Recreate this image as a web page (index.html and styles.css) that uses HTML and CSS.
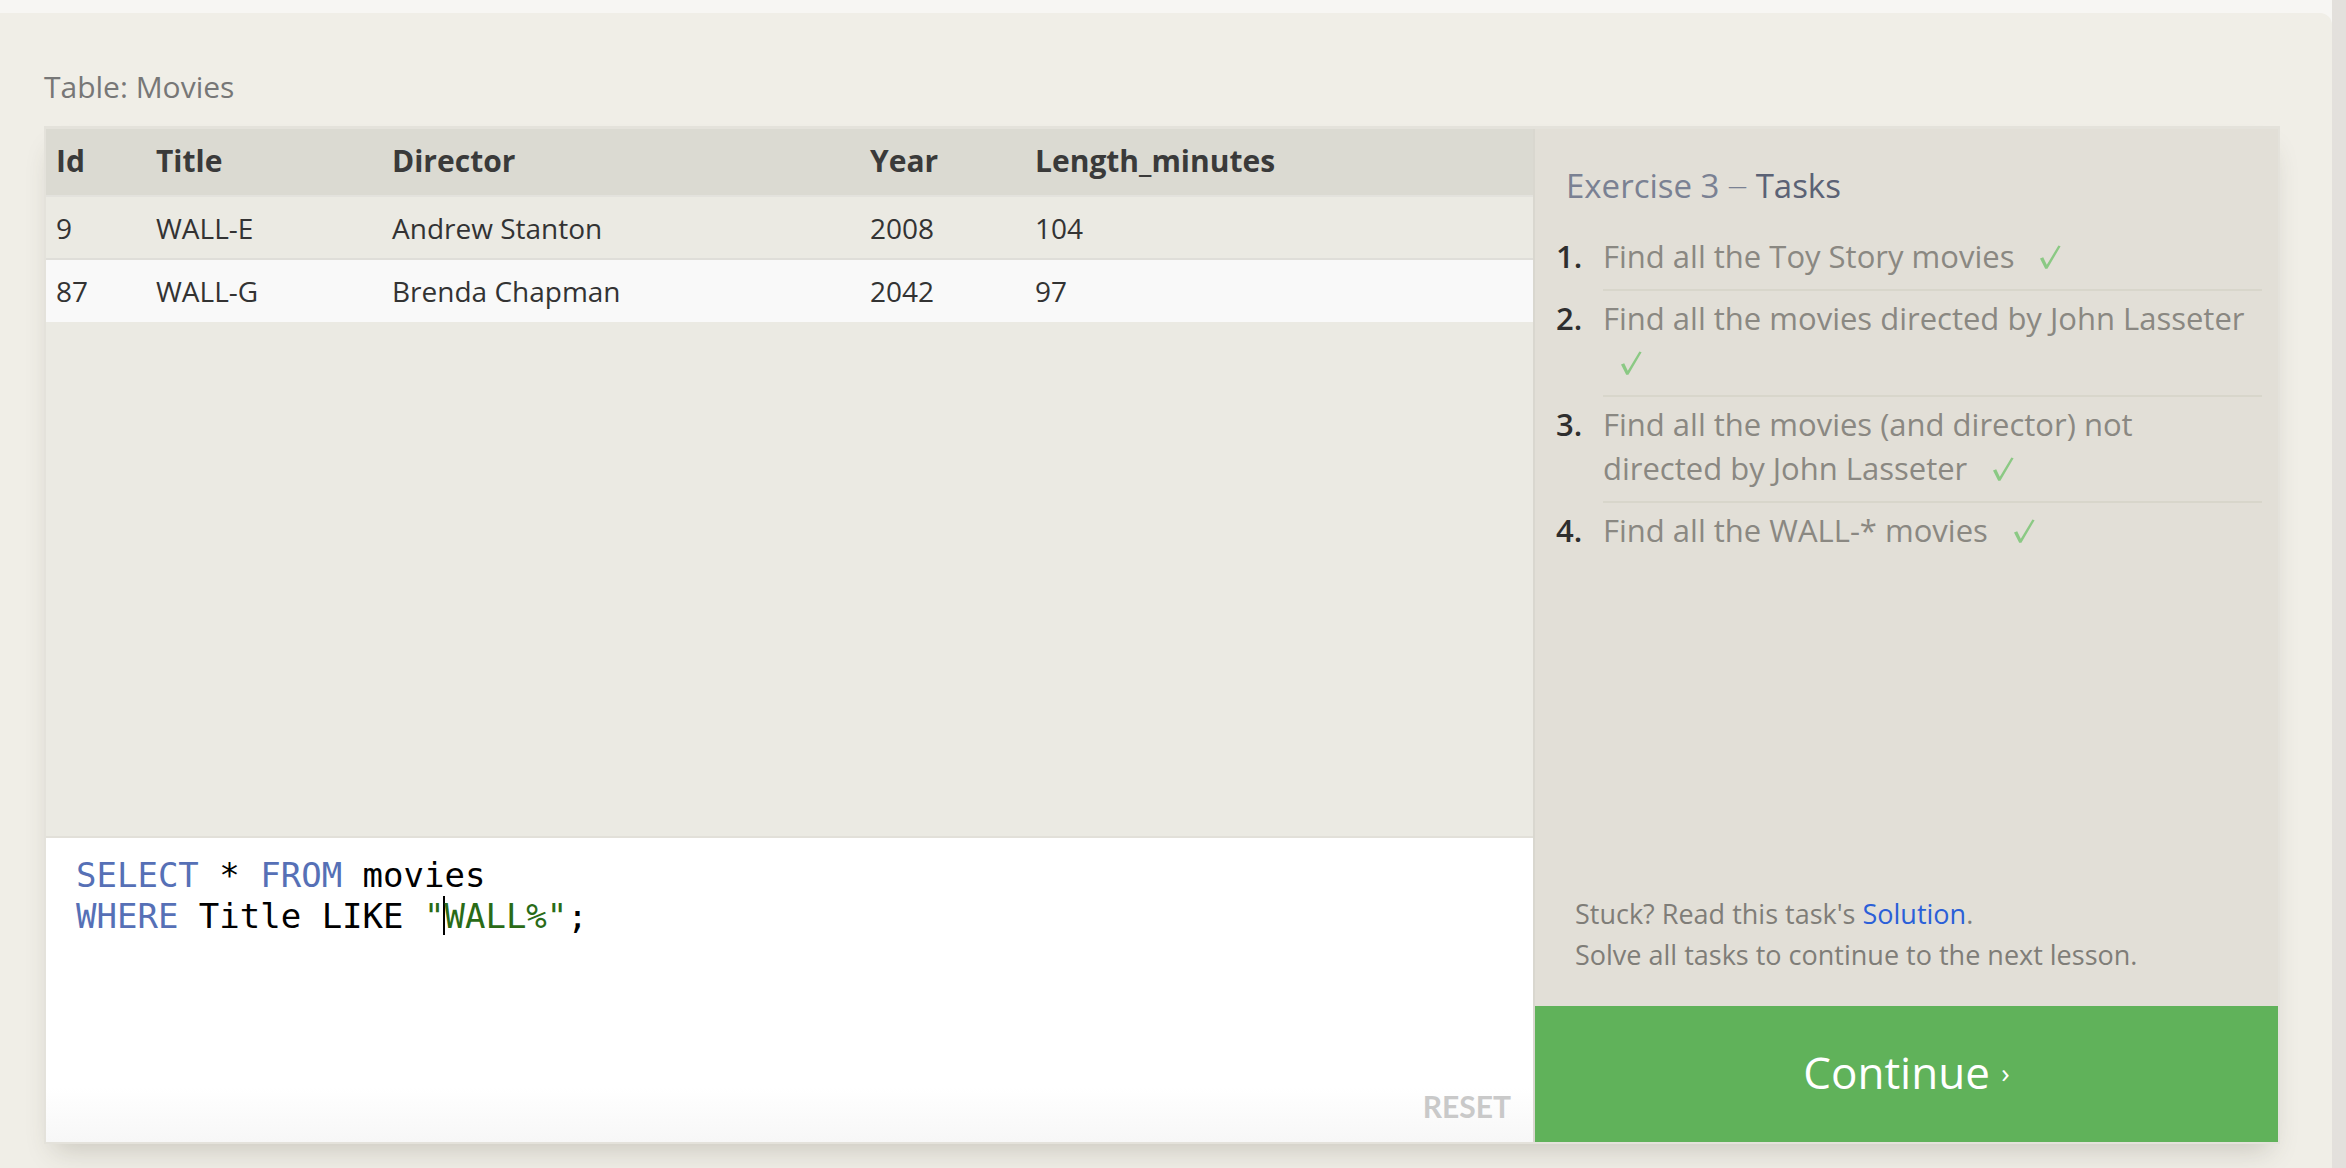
FILE: index.html
```html
<!DOCTYPE html>
<html lang="en">
<head>
<meta charset="utf-8">
<title>SQL Lesson 3: Queries with constraints (Pt. 2)</title>
<link rel="stylesheet" href="styles.css">
</head>
<body>
<div class="page">
  <div class="frame">
    <div class="topstrip"></div>
    <main class="card">
      <div class="label">Table: Movies</div>
      <div class="workspace">
        <section class="left">
          <div class="table" role="table">
            <div class="tr th" role="row">
              <div role="columnheader">Id</div>
              <div role="columnheader">Title</div>
              <div role="columnheader">Director</div>
              <div role="columnheader">Year</div>
              <div role="columnheader">Length_minutes</div>
            </div>
            <div class="tr r1" role="row">
              <div role="cell">9</div>
              <div role="cell">WALL-E</div>
              <div role="cell">Andrew Stanton</div>
              <div role="cell">2008</div>
              <div role="cell">104</div>
            </div>
            <div class="tr r2" role="row">
              <div role="cell">87</div>
              <div role="cell">WALL-G</div>
              <div role="cell">Brenda Chapman</div>
              <div role="cell">2042</div>
              <div role="cell">97</div>
            </div>
          </div>
          <div class="editor">
            <div class="code">
              <div class="line"><span class="kw">SELECT</span> * <span class="kw">FROM</span> movies</div>
              <div class="line"><span class="kw">WHERE</span> Title LIKE <span class="str">"<span class="cursor"></span>WALL%"</span>;</div>
            </div>
            <div class="editor-foot"><span class="reset">RESET</span></div>
          </div>
        </section>
        <aside class="panel">
          <h2 class="title">Exercise 3 <span class="dash">—</span> <span class="strong">Tasks</span></h2>
          <ol class="tasks">
            <li><span class="num">1.</span><span class="body">Find all the Toy Story movies <svg class="check" viewBox="0 0 22 24" width="22" height="24" aria-label="✓"><polygon points="1,13.5 4.2,12.3 7.8,19.8 19.4,0.5 21.6,1.3 8.4,23.7 6.2,23.7"/></svg></span></li>
            <li><span class="num">2.</span><span class="body">Find all the movies directed by John Lasseter <svg class="check" viewBox="0 0 22 24" width="22" height="24" aria-label="✓"><polygon points="1,13.5 4.2,12.3 7.8,19.8 19.4,0.5 21.6,1.3 8.4,23.7 6.2,23.7"/></svg></span></li>
            <li><span class="num">3.</span><span class="body">Find all the movies (and director) not directed by John Lasseter <svg class="check" viewBox="0 0 22 24" width="22" height="24" aria-label="✓"><polygon points="1,13.5 4.2,12.3 7.8,19.8 19.4,0.5 21.6,1.3 8.4,23.7 6.2,23.7"/></svg></span></li>
            <li><span class="num">4.</span><span class="body">Find all the WALL-* movies <svg class="check" viewBox="0 0 22 24" width="22" height="24" aria-label="✓"><polygon points="1,13.5 4.2,12.3 7.8,19.8 19.4,0.5 21.6,1.3 8.4,23.7 6.2,23.7"/></svg></span></li>
          </ol>
          <div class="help">
            <p>Stuck? Read this task's <a href="#" class="link">Solution</a>.</p>
            <p>Solve all tasks to continue to the next lesson.</p>
          </div>
          <a href="#" class="continue">Continue <span class="chev">›</span></a>
        </aside>
      </div>
    </main>
  </div>
  <div class="sidestrip"></div>
</div>
</body>
</html>
```

FILE: styles.css
```css
html, body {
  margin: 0;
  padding: 0;
}

body {
  background: #f7f6f3;
  font-family: "Open Sans", "Noto Sans", sans-serif;
  color: #333;
  overflow: hidden;
}

.page {
  display: flex;
  width: 2346px;
  height: 1168px;
  overflow: hidden;
}

.frame {
  flex: 1;
  display: flex;
  flex-direction: column;
}

.topstrip {
  height: 13px;
  flex: none;
  background: #f7f6f3;
}

.card {
  flex: 1;
  background: #f0eee7;
  border-top-right-radius: 12px;
  padding: 54px 52px 0 44px;
}

.sidestrip {
  width: 14px;
  flex: none;
  background: #e3e0dc;
}

.label {
  font-size: 30px;
  line-height: 40px;
  color: #777;
}

.workspace {
  box-sizing: border-box;
  margin-top: 19px;
  width: 2236px;
  height: 1018px;
  border: 2px solid #e4e2db;
  border-top-width: 3px;
  display: grid;
  grid-template-columns: 1487px 1fr;
  box-shadow: 0 16px 26px -10px rgba(70, 64, 45, 0.22);
}

/* left column */
.left {
  display: flex;
  flex-direction: column;
  min-height: 0;
}

.table {
  flex: 1;
  background: #ebeae3;
}

.tr {
  box-sizing: border-box;
  display: grid;
  grid-template-columns: 100px 236px 478px 165px 1fr;
  align-items: center;
}

.tr > div {
  padding-left: 10px;
}

.th {
  height: 66px;
  padding-bottom: 3px;
  background: #dbdad2;
  font-size: 30px;
  font-weight: 700;
  color: #3a3a3a;
}

.r1 {
  height: 63px;
  border-top: 2px solid #e3e2dd;
  background: #ebeae3;
  font-size: 28px;
  color: #333;
}

.r2 {
  height: 64px;
  border-top: 2px solid #dfded9;
  background: #f9f9f9;
  font-size: 28px;
  color: #333;
}

.editor {
  box-sizing: border-box;
  height: 306px;
  flex: none;
  border-top: 2px solid #e2e0d9;
  background: linear-gradient(to bottom, #ffffff 0%, #ffffff 82%, #f7f7f7 100%);
  display: flex;
  flex-direction: column;
}

.code {
  flex: 1;
  padding: 17px 0 0 30px;
  font-family: "DejaVu Sans Mono", "Liberation Mono", monospace;
  font-size: 34px;
  line-height: 41px;
  color: #000;
}

.line {
  white-space: pre;
}

.kw {
  color: #5670b6;
}

.str {
  color: #2a6b17;
}

.cursor {
  display: inline-block;
  width: 0;
  height: 39px;
  border-left: 2px solid #000;
  margin-left: -1px;
  margin-right: -1px;
  vertical-align: -7px;
}

.editor-foot {
  text-align: right;
  padding: 0 22px 18px 0;
}

.reset {
  font-family: Lato, "Open Sans", sans-serif;
  font-weight: 700;
  font-size: 30px;
  line-height: 36px;
  color: #c9c9c9;
}

/* right panel */
.panel {
  border-left: 2px solid #d9d7cf;
  background: #e2dfd7;
  display: flex;
  flex-direction: column;
  min-height: 0;
}

.title {
  margin: 0;
  padding: 35px 0 0 31px;
  font-size: 33px;
  line-height: 44px;
  font-weight: 400;
  color: #7a8193;
}

.title .dash {
  font-size: 19px;
  vertical-align: 0.25em;
}

.title .strong {
  color: #5b6275;
}

.tasks {
  list-style: none;
  margin: 21px 16px 0 21px;
  padding: 0;
  font-size: 31px;
  line-height: 44px;
}

.tasks li {
  display: flex;
}

.num {
  width: 47px;
  flex: none;
  padding-top: 5px;
  color: #2e2e2e;
  font-weight: 600;
}

.body {
  flex: 1;
  padding: 5px 8px 11px 0;
  border-bottom: 2px solid #d8d6cb;
  color: #8a8882;
}

.tasks li:last-child .body {
  border-bottom: none;
}

.check {
  fill: #8bc984;
  margin-left: 17px;
  vertical-align: -1px;
}

.help {
  margin-top: auto;
  padding: 0 0 31px 40px;
  font-size: 27px;
  line-height: 41px;
  color: #7f7d78;
}

.help p {
  margin: 0;
}

.link {
  color: #2b5fd8;
  text-decoration: none;
}

.continue {
  height: 136px;
  flex: none;
  box-sizing: border-box;
  padding-bottom: 4px;
  background: #60b25a;
  color: #fff;
  text-decoration: none;
  font-size: 44px;
  display: flex;
  align-items: center;
  justify-content: center;
  white-space: pre;
}

.chev {
  font-size: 28px;
}
```
